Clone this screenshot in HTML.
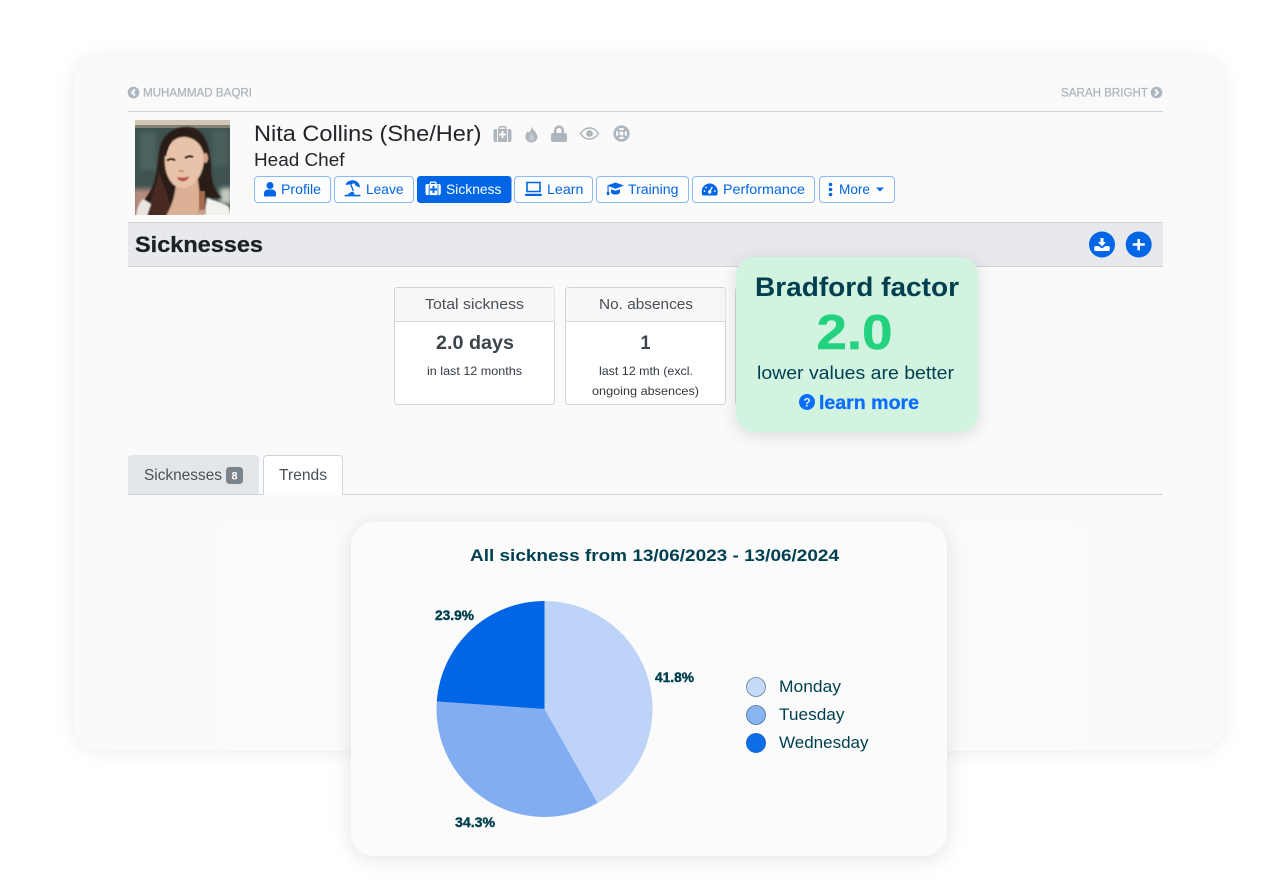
<!DOCTYPE html>
<html lang="en">
<head>
<meta charset="utf-8">
<title>Sicknesses</title>
<style>
html,body{margin:0;padding:0;background:#fff;width:1282px;height:886px;overflow:hidden}
svg{display:block}
text{font-family:"Liberation Sans",Arial,sans-serif}
</style>
</head>
<body>
<svg xmlns="http://www.w3.org/2000/svg" width="1282" height="886" viewBox="0 0 1282 886">
<defs>
<filter id="sh1" x="-10%" y="-10%" width="120%" height="120%"><feDropShadow dx="0" dy="1" stdDeviation="9" flood-color="#000" flood-opacity=".08"/></filter>
<filter id="sh2" x="-15%" y="-15%" width="130%" height="130%"><feDropShadow dx="0" dy="3" stdDeviation="8" flood-color="#000" flood-opacity=".13"/></filter>
<filter id="sh3" x="-15%" y="-15%" width="130%" height="130%"><feDropShadow dx="0" dy="3" stdDeviation="10" flood-color="#000" flood-opacity=".11"/></filter>
<filter id="b0"><feGaussianBlur stdDeviation="2.500"/></filter>
<filter id="b1"><feGaussianBlur stdDeviation=".9"/></filter>
<filter id="b2"><feGaussianBlur stdDeviation=".55"/></filter>
<clipPath id="ph"><rect x="135" y="120" width="95" height="95"/></clipPath>
<g id="med"><path d="M5 3V1.600C5 .7 5.700 0 6.600 0h4.800c.9 0 1.600.7 1.600 1.600V3h3c1.100 0 2 .9 2 2v9c0 1.100-.9 2-2 2H2c-1.100 0-2-.9-2-2V5c0-1.100.9-2 2-2zM6.500 3h5V1.500h-5z" fill-rule="evenodd"/></g>
</defs>

<rect width="1282" height="886" fill="#fff"/>
<!-- main card -->
<rect x="74" y="57" width="1150" height="694" rx="28" fill="#fafafa" filter="url(#sh1)"/>

<!-- prev/next -->
<circle cx="133.500" cy="92.500" r="5.800" fill="#adb5bd"/>
<path d="M135 89.500l-3 3 3 3" fill="none" stroke="#fafafa" stroke-width="2"/>
<text x="143" y="96.500" font-size="11.500" fill="#adb5bd" stroke="#adb5bd" stroke-width=".25" textLength="109" lengthAdjust="spacingAndGlyphs">MUHAMMAD BAQRI</text>
<text x="1061" y="96.500" font-size="11.500" fill="#adb5bd" stroke="#adb5bd" stroke-width=".25" textLength="87" lengthAdjust="spacingAndGlyphs">SARAH BRIGHT</text>
<circle cx="1156.500" cy="92.500" r="5.800" fill="#adb5bd"/>
<path d="M1155 89.500l3 3-3 3" fill="none" stroke="#fafafa" stroke-width="2"/>
<rect x="128" y="111" width="1035" height="1" fill="#ced4da"/>

<!-- photo -->
<g clip-path="url(#ph)">
<rect x="135" y="120" width="95" height="95" fill="#3e5350"/>
<g filter="url(#b0)">
<rect x="140" y="132" width="16" height="38" fill="#4d625f"/>
<rect x="212" y="130" width="16" height="36" fill="#4a5e5b"/>
<rect x="133" y="189" width="30" height="28" fill="#b68b80"/>
<rect x="220" y="188" width="12" height="16" fill="#c2c9be"/>
</g>
<rect x="135" y="120" width="95" height="5" fill="#cfc7b4"/>
<rect x="135" y="125" width="95" height="3" fill="#818373"/>
<g filter="url(#b1)">
<!-- hair back -->
<path d="M187 127C171 127 161 137 159 152C157 170 156 182 149 193C145 199 142 203 142 207C146 204 149 203 150 204C148 208 147 212 147 216H205L206 198L222 198C213 190 211 178 211 165C210 145 204 127 187 127Z" fill="#2a1a17"/>
<path d="M159 172C156 186 151 196 150 206C149 211 148 214 148 216H172C170 200 164 186 159 172Z" fill="#4a2c22"/>
<!-- skin -->
<path d="M176 180C176 192 173 204 166 216H207C203 206 199 194 198 180Z" fill="#dcb094"/>
<path d="M184 137C174 137 167 145 165 156C164 168 167 179 174 185C178 188 183 189 188 187C196 184 203 174 204 160C205 148 196 137 184 137Z" fill="#e9c3a9"/>
<ellipse cx="205.500" cy="158" rx="2.500" ry="5" fill="#d6a68a"/>
<!-- clothing -->
<path d="M136 216C137 208 139 203 143 199L151 204L147 216Z" fill="#e9e5e0"/>
<path d="M207 198C213 200 224 203 229 207L231 216H204Z" fill="#f3f1ec"/>
</g>
<g filter="url(#b2)">
<rect x="199" y="191" width="6" height="21" fill="#a46c4d"/>
<rect x="198" y="210" width="8" height="4" fill="#c6a28d"/>
<path d="M167 160.500c3-2 6-2 8 0" stroke="#2c1c18" stroke-width="1.700" fill="none"/>
<path d="M185 158c3-2 6-2.200 8-.8" stroke="#2c1c18" stroke-width="1.700" fill="none"/>
<path d="M179 170c1 1.800 3.500 1.800 5 .2" stroke="#b98a70" stroke-width="1.500" fill="none"/>
<path d="M177 177c4 1 8 .8 12-.8-1 3.400-3.500 5-6.500 5-2.500 0-4.500-1.600-5.500-4.200z" fill="#b8554e"/>
<path d="M186 130c-8 1-17 10-20 26l-4-1c1-14 9-26 24-25z" fill="#2a1a17"/>
</g>
</g>

<!-- name -->
<text x="254" y="141" font-size="22.500" fill="#212529" textLength="227.500" lengthAdjust="spacingAndGlyphs">Nita Collins (She/Her)</text>
<text x="254" y="166" font-size="18" fill="#212529" textLength="90.500" lengthAdjust="spacingAndGlyphs">Head Chef</text>

<!-- status icons -->
<g fill="#adb5bd">
<use href="#med" transform="translate(493.500 126)"/>
<path d="M501.500 131h2v2.500h2.500v2h-2.500v2.500h-2v-2.500H499v-2h2.500z" fill="#fafafa"/>
<rect x="497" y="129" width=".9" height="13" fill="#fafafa"/><rect x="507" y="129" width=".9" height="13" fill="#fafafa"/>
<path d="M531.500 125.500c.3 3.200 2.400 4.400 4 6.800 1.800 2.800 2.500 4.600 1.700 6.300-1 2.400-3.300 3.900-5.700 3.900-3 0-5.600-2-6-5-.3-2.700.9-4.800 2.300-6.300l1.200 1.700c1.900-2.100 2.800-4.600 2.500-7.400z"/>
<path d="M534.400 137.500c0-1.500-1.500-2.800-2.700-4.500-1 2-2.500 3-2.500 5s1.200 3 2.500 3 2.700-1.500 2.700-3.500z" fill="#fafafa" opacity=".3"/>
<path d="M554 133v-2.500c0-2.800 2.200-5 5-5s5 2.200 5 5V133h1c1.100 0 2 .9 2 2v5c0 1.100-.9 2-2 2h-12c-1.100 0-2-.9-2-2v-5c0-1.100.9-2 2-2zm2.500 0h5v-2.500c0-1.400-1.100-2.500-2.500-2.500s-2.500 1.100-2.500 2.500z" fill-rule="evenodd"/>
<path d="M580.500 133.500c2.200-3.600 5.500-5.500 9-5.500s6.800 1.900 9 5.500c-2.200 3.600-5.500 5.500-9 5.500s-6.800-1.900-9-5.500z" fill="none" stroke="#adb5bd" stroke-width="1.400"/>
<circle cx="589.500" cy="133.500" r="3.400"/>
<circle cx="621.500" cy="133.500" r="6.800" fill="none" stroke="#adb5bd" stroke-width="2.600"/>
<circle cx="621.500" cy="133.500" r="2.700" fill="none" stroke="#adb5bd" stroke-width="1.300"/>
<path d="M616.500 128.500l3 3M626.500 128.500l-3 3M616.500 138.500l3-3M626.500 138.500l-3-3" stroke="#adb5bd" stroke-width="2.400"/>
</g>

<!-- buttons -->
<g fill="#fdfdfd" stroke="#8cbaf6" stroke-width="1">
<rect x="254.500" y="176.500" width="76" height="26" rx="3.500"/>
<rect x="334.500" y="176.500" width="79" height="26" rx="3.500"/>
<rect x="514.500" y="176.500" width="78" height="26" rx="3.500"/>
<rect x="596.500" y="176.500" width="92" height="26" rx="3.500"/>
<rect x="692.500" y="176.500" width="122" height="26" rx="3.500"/>
<rect x="819.500" y="176.500" width="75" height="26" rx="3.500"/>
</g>
<rect x="417" y="176" width="94.500" height="27" rx="3.500" fill="#0066e5"/>

<g font-size="14" fill="#0066e5">
<text x="281" y="194" textLength="40" lengthAdjust="spacingAndGlyphs">Profile</text>
<text x="366" y="194" textLength="37.500" lengthAdjust="spacingAndGlyphs">Leave</text>
<text x="446" y="194" fill="#fff" textLength="55.500" lengthAdjust="spacingAndGlyphs">Sickness</text>
<text x="547" y="194" textLength="36.500" lengthAdjust="spacingAndGlyphs">Learn</text>
<text x="628" y="194" textLength="50.500" lengthAdjust="spacingAndGlyphs">Training</text>
<text x="723" y="194" textLength="82" lengthAdjust="spacingAndGlyphs">Performance</text>
<text x="839" y="194" textLength="31" lengthAdjust="spacingAndGlyphs">More</text>
</g>
<g fill="#0066e5">
<circle cx="270" cy="185.500" r="3.500"/>
<path d="M264 195.500v-2c0-2.500 2-4 4-4h4c2 0 4 1.500 4 4v2c0 .5-.5 1-1 1h-10c-.5 0-1-.5-1-1z"/>
<path d="M345.500 185c1-3.500 5-5.500 9-4.500 3.500 1 5.500 4 5.500 7l-4-1.500-1.800-2.800-3.200 1z"/>
<path d="M350.500 183.500l2.800 7.500" stroke="#0066e5" stroke-width="1.300"/>
<rect x="344.500" y="194.800" width="16" height="1.600" rx=".8"/>
<path d="M347.500 194.800c1.500-1.800 3.300-2.800 5.800-3l1.400 3z"/>
<path d="M527 182.500h13v9h-13z" fill="none" stroke="#0066e5" stroke-width="1.600"/>
<rect x="525" y="193.800" width="17" height="2.200" rx="1.100"/>
<path d="M615.500 182.500l8.500 3-8.500 3.200-8.500-3.200z"/>
<path d="M611 189.200l4.500 1.600 4.500-1.600v3c0 1.300-2 2.300-4.500 2.300s-4.500-1-4.500-2.300z"/>
<rect x="607.500" y="186" width="1.100" height="6"/><rect x="606.800" y="192" width="2.500" height="3"/>
<path d="M702.500 195.500c-.5-1.300-.8-2.700-.8-4 0-4.500 3.600-8 8-8s8 3.500 8 8c0 1.300-.3 2.700-.8 4z"/>
<path d="M709.700 191.500l2.600-4.500" stroke="#fdfdfd" stroke-width="1.400"/>
<circle cx="709.700" cy="192" r="1.700" fill="#fdfdfd"/>
<circle cx="704.500" cy="191" r=".9" fill="#fdfdfd"/><circle cx="706" cy="187.500" r=".9" fill="#fdfdfd"/><circle cx="714.800" cy="191" r=".9" fill="#fdfdfd"/>
<circle cx="830.500" cy="184.500" r="1.800"/><circle cx="830.500" cy="189.500" r="1.800"/><circle cx="830.500" cy="194.500" r="1.800"/>
<path d="M876 187.500h8l-4 4z"/>
</g>
<use href="#med" transform="translate(425.500 181.500) scale(.85)" fill="#fff"/>
<path d="M432.500 186h2v2.500h2.500v2h-2.500v2.500h-2v-2.500H430v-2h2.500z" fill="#0066e5"/>
<rect x="428.700" y="184.500" width=".9" height="11" fill="#0066e5"/><rect x="437.500" y="184.500" width=".9" height="11" fill="#0066e5"/>

<!-- section header -->
<rect x="128" y="222.500" width="1035" height="44" fill="#e8e9ed"/>
<rect x="128" y="222" width="1035" height="1" fill="#ced4da"/>
<rect x="128" y="266" width="1035" height="1" fill="#ced4da"/>
<text x="135" y="252" font-size="22.500" font-weight="700" fill="#1d2125" stroke="#1d2125" stroke-width=".3" textLength="128" lengthAdjust="spacingAndGlyphs">Sicknesses</text>
<circle cx="1102" cy="244.500" r="13" fill="#0066e5"/>
<circle cx="1138.700" cy="244.500" r="13" fill="#0066e5"/>
<path d="M1100.500 238h3v4h2.500l-4 4.500-4-4.500h2.500z" fill="#fff"/>
<path d="M1096 246h2.500l3.500 2.500 3.500-2.500h2.500c1 0 1.800.5 1.800 1.500v2.300c0 .7-.5 1.200-1.200 1.200h-13.200c-.7 0-1.200-.5-1.200-1.200v-2.300c0-1 .8-1.500 1.800-1.500z" fill="#fff"/>
<path d="M1137.400 239h2.600v4.200h4.800v2.600H1140v4.400h-2.600v-4.400h-4.700v-2.600h4.700z" fill="#fff"/>

<!-- stat cards -->
<g stroke="#ced4da" stroke-width="1">
<rect x="394.500" y="287.500" width="160" height="117" rx="3" fill="#fff"/>
<rect x="565.500" y="287.500" width="160" height="117" rx="3" fill="#fff"/>
<rect x="735.500" y="287.500" width="100" height="117" rx="3" fill="#fff"/>
</g>
<path d="M395 321V291c0-2 1-3 3-3h153.500c2 0 3 1 3 3v30z" fill="#f7f7f7"/>
<path d="M566 321V291c0-2 1-3 3-3h153.500c2 0 3 1 3 3v30z" fill="#f7f7f7"/>
<rect x="395" y="321" width="159.500" height="1" fill="#d8dbde"/>
<rect x="566" y="321" width="159.500" height="1" fill="#d8dbde"/>
<g fill="#495057">
<text x="425" y="309" font-size="15" textLength="99" lengthAdjust="spacingAndGlyphs">Total sickness</text>
<text x="599" y="309" font-size="15" textLength="94" lengthAdjust="spacingAndGlyphs">No. absences</text>
<text x="436" y="349" font-size="19.500" font-weight="700" fill="#3d444b" textLength="78" lengthAdjust="spacingAndGlyphs">2.0 days</text>
<text x="640.500" y="349" font-size="19.500" font-weight="700" fill="#3d444b" textLength="10" lengthAdjust="spacingAndGlyphs">1</text>
<text x="427" y="375" font-size="12" fill="#343a40" textLength="95" lengthAdjust="spacingAndGlyphs">in last 12 months</text>
<text x="599" y="375" font-size="12" fill="#343a40" textLength="94" lengthAdjust="spacingAndGlyphs">last 12 mth (excl.</text>
<text x="592" y="395" font-size="12" fill="#343a40" textLength="107" lengthAdjust="spacingAndGlyphs">ongoing absences)</text>
</g>

<!-- Bradford -->
<rect x="736" y="257" width="242" height="175" rx="18" fill="#d2f3e0" filter="url(#sh2)"/>
<text x="755" y="296" font-size="26.500" font-weight="700" fill="#003f4f" textLength="204" lengthAdjust="spacingAndGlyphs">Bradford factor</text>
<text x="816.500" y="349" font-size="49" font-weight="700" fill="#22d27f" stroke="#22d27f" stroke-width=".5" textLength="76" lengthAdjust="spacingAndGlyphs">2.0</text>
<text x="757" y="379" font-size="18" fill="#003f4f" textLength="197" lengthAdjust="spacingAndGlyphs">lower values are better</text>
<circle cx="807" cy="402" r="8" fill="#0d6efd"/>
<text x="807" y="406.500" font-size="12" font-weight="700" fill="#d2f3e0" text-anchor="middle">?</text>
<text x="819" y="409" font-size="19" font-weight="700" fill="#0d6efd" stroke="#0d6efd" stroke-width=".3" textLength="100" lengthAdjust="spacingAndGlyphs">learn more</text>

<!-- tabs -->
<rect x="128" y="494" width="1035" height="1" fill="#ced4da"/>
<path d="M128 495v-36c0-2.200 1.800-4 4-4h123c2.200 0 4 1.800 4 4v36z" fill="#e4e7ea"/>
<rect x="128" y="494" width="131" height="1" fill="#ced4da"/>
<path d="M263.500 495v-36c0-2 1.500-3.500 3.500-3.500h72c2 0 3.500 1.500 3.500 3.500v36" fill="#fff" stroke="#ced4da"/>
<text x="144" y="480" font-size="16" fill="#495057" textLength="78" lengthAdjust="spacingAndGlyphs">Sicknesses</text>
<rect x="226" y="467" width="17" height="17" rx="3.500" fill="#7b838b"/>
<text x="234.500" y="479.500" font-size="11" font-weight="700" fill="#fff" text-anchor="middle">8</text>
<text x="279" y="480" font-size="16" fill="#495057" textLength="48" lengthAdjust="spacingAndGlyphs">Trends</text>

<!-- faint inner card -->
<rect x="216" y="524" width="870" height="227" rx="20" fill="#fbfbfb"/>

<!-- chart card -->
<rect x="351" y="522" width="596" height="334" rx="24" fill="#fbfbfb" filter="url(#sh3)"/>
<text x="470" y="561" font-size="17" font-weight="700" fill="#003f4f" textLength="369" lengthAdjust="spacingAndGlyphs">All sickness from 13/06/2023 - 13/06/2024</text>

<path d="M544.500 709V601A108 108 0 0 1 597.700 803Z" fill="#bdd4f8"/>
<path d="M544.500 709L597.700 803A108 108 0 0 1 436.800 701.500Z" fill="#82adf1"/>
<path d="M544.500 709L436.800 701.500A108 108 0 0 1 544.500 601Z" fill="#0066e5"/>

<g font-size="13.500" font-weight="700" fill="#003f4f" stroke="#003f4f" stroke-width=".4">
<text x="435" y="620" textLength="39" lengthAdjust="spacingAndGlyphs">23.9%</text>
<text x="655" y="682" textLength="39" lengthAdjust="spacingAndGlyphs">41.8%</text>
<text x="455" y="827" textLength="40" lengthAdjust="spacingAndGlyphs">34.3%</text>
</g>

<circle cx="756" cy="687" r="9.500" fill="#c6dafa" stroke="#5f8296" stroke-width=".8"/>
<circle cx="756" cy="715" r="9.500" fill="#8ab3f2" stroke="#4a7399" stroke-width=".8"/>
<circle cx="756" cy="743" r="9.500" fill="#0d6ee8" stroke="#0a5cc0" stroke-width=".8"/>
<g font-size="17" fill="#003f4f">
<text x="779" y="692" textLength="62" lengthAdjust="spacingAndGlyphs">Monday</text>
<text x="779" y="720" textLength="65.500" lengthAdjust="spacingAndGlyphs">Tuesday</text>
<text x="779" y="748" textLength="89.500" lengthAdjust="spacingAndGlyphs">Wednesday</text>
</g>
</svg>
</body>
</html>
